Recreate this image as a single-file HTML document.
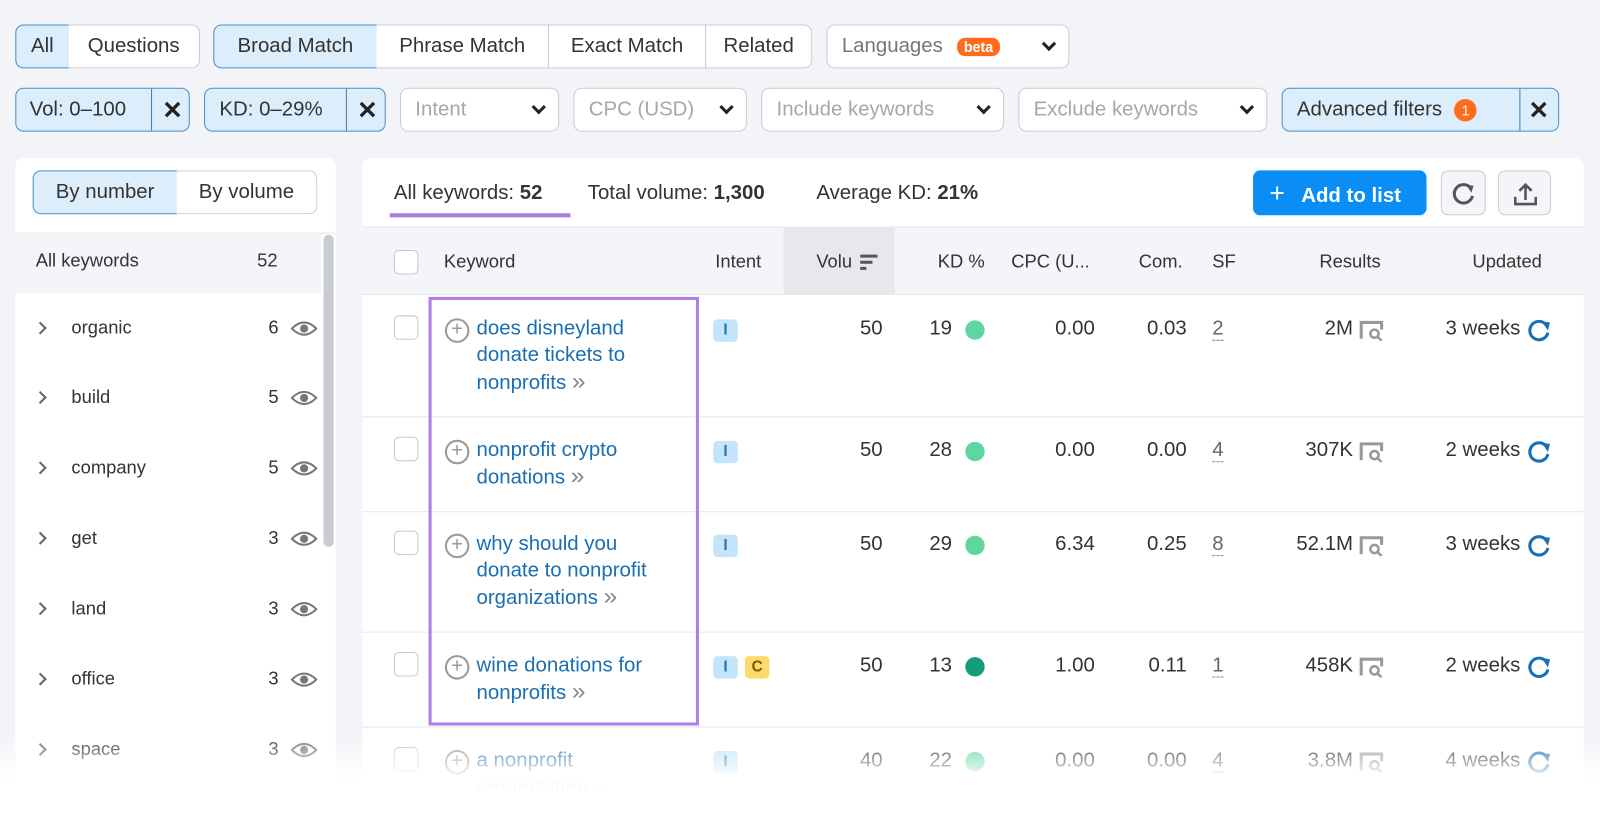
<!DOCTYPE html>
<html><head><meta charset="utf-8"><style>
*{box-sizing:border-box;margin:0;padding:0}
body{width:1600px;height:801px;background:#f3f4f8;font-family:"Liberation Sans",sans-serif;color:#333;position:relative;overflow:hidden;font-size:20px}
#w{position:absolute;left:0;top:0;width:1568px;height:785px;transform:scale(1.0204);transform-origin:0 0}
.a{position:absolute}
.btn{position:absolute;height:43px;border:1px solid #c8ccd4;background:#fff;display:flex;align-items:center;justify-content:center;font-size:20px;color:#333}
.sel{background:#dcedfb;border-color:#4a8fc6}
.ph{color:#a3a7ae;justify-content:space-between;padding:0 14px;border-radius:8px}
.chev{width:10px;height:10px;border-right:3px solid #222;border-bottom:3px solid #222;transform:rotate(45deg);margin-top:-5px}
.vl{position:absolute;top:0;bottom:0;width:1px;background:#3f7fb5}
.x{font-weight:bold;font-size:24px;color:#222}
.panel{position:absolute;background:#fff;border-radius:8px}
.li{position:absolute;left:35px;width:280px;font-size:18px;color:#333}
.li .c{position:absolute;left:0;top:6px;width:9px;height:9px;border-right:2px solid #666;border-bottom:2px solid #666;transform:rotate(-45deg)}
.li .t{position:absolute;left:35px}
.li .n{position:absolute;left:228px}
.eye{position:absolute;left:250px;top:2px}
.th{position:absolute;top:246px;font-size:18px;color:#333}
.hl{position:absolute;left:355px;width:1197px;height:1px;background:#e4e6eb}
.cb{position:absolute;left:386px;width:24px;height:24px;border:1px solid #c4c8cf;border-radius:5px;background:#fff}
.kw{position:absolute;left:467px;font-size:20px;color:#1a6fb3;line-height:26px}
.plus{position:absolute;left:436px;width:24px;height:24px;border:2px solid #999;border-radius:50%;color:#999;font-size:20px;line-height:18px;text-align:center}
.r{position:absolute;text-align:right;font-size:20px;color:#333}
.dot{position:absolute;width:19px;height:19px;border-radius:50%;background:#5ed6a0}
.badge{position:absolute;width:24px;height:22px;border-radius:4px;background:#c3e4fb;color:#1f77b4;font-size:15px;font-weight:bold;text-align:center;line-height:22px}
.sf{position:absolute;left:1188px;font-size:20px;color:#666;border-bottom:1px dashed #888;line-height:22px}
</style></head><body>
<div id="w">
<div class="btn sel" style="left:15px;top:24px;width:53px;border-radius:8px 0 0 8px">All</div>
<div class="btn" style="left:67px;top:24px;width:129px;border-radius:0 8px 8px 0;border-left:none">Questions</div>
<div class="btn sel" style="left:209px;top:24px;width:161px;border-radius:8px 0 0 8px">Broad Match</div>
<div class="btn" style="left:369px;top:24px;width:169px;border-left:none">Phrase Match</div>
<div class="btn" style="left:537px;top:24px;width:155px">Exact Match</div>
<div class="btn" style="left:691px;top:24px;width:105px;border-radius:0 8px 8px 0">Related</div>
<div class="btn ph" style="left:810px;top:24px;width:238px;color:#777"><span>Languages <span style="background:#ff6b1a;color:#fff;font-size:14px;font-weight:bold;border-radius:8px;padding:1px 7px;margin-left:8px">beta</span></span><span class="chev"></span></div>

<div class="btn sel" style="left:15px;top:86px;width:171px;border-radius:8px;justify-content:flex-start;padding-left:13px">Vol: 0–100<div class="vl" style="left:132px"></div><span class="x a" style="left:143px;top:7px">✕</span></div>
<div class="btn sel" style="left:200px;top:86px;width:178px;border-radius:8px;justify-content:flex-start;padding-left:14px">KD: 0–29%<div class="vl" style="left:138px"></div><span class="x a" style="left:149px;top:7px">✕</span></div>
<div class="btn ph" style="left:392px;top:86px;width:156px">Intent<span class="chev"></span></div>
<div class="btn ph" style="left:562px;top:86px;width:170px">CPC (USD)<span class="chev"></span></div>
<div class="btn ph" style="left:746px;top:86px;width:238px">Include keywords<span class="chev"></span></div>
<div class="btn ph" style="left:998px;top:86px;width:244px">Exclude keywords<span class="chev"></span></div>
<div class="btn sel" style="left:1256px;top:86px;width:272px;border-radius:8px;justify-content:flex-start;padding-left:14px">Advanced filters <span style="display:inline-block;width:22px;height:22px;border-radius:50%;background:#ff6b1a;color:#fff;font-size:14px;text-align:center;line-height:22px;margin-left:12px">1</span><div class="vl" style="left:232px"></div><span class="x a" style="left:241px;top:7px">✕</span></div>

<div class="panel" style="left:15px;top:155px;width:314px;height:660px"></div>
<div class="btn sel" style="left:32px;top:167px;width:142px;border-radius:8px 0 0 8px">By number</div>
<div class="btn" style="left:173px;top:167px;width:138px;border-radius:0 8px 8px 0;border-left:none">By volume</div>
<div class="a" style="left:15px;top:228px;width:314px;height:1px;background:#e4e6eb"></div>
<div class="a" style="left:15px;top:229px;width:300px;height:58px;background:#f4f5f8"></div>
<div class="a" style="left:35px;top:245px;font-size:18px">All keywords</div>
<div class="a" style="left:252px;top:245px;font-size:18px">52</div>
<div class="a" style="left:317px;top:230px;width:10px;height:306px;background:#c9ccd2;border-radius:5px"></div>
<div id="lis"></div>

<div class="panel" style="left:355px;top:155px;width:1197px;height:660px"></div>
<div class="a" style="left:386px;top:178px;font-size:20px">All keywords: <b>52</b></div>
<div class="a" style="left:382px;top:209px;width:177px;height:4px;background:#a87de0"></div>
<div class="a" style="left:576px;top:178px;font-size:20px">Total volume: <b>1,300</b></div>
<div class="a" style="left:800px;top:178px;font-size:20px">Average KD: <b>21%</b></div>
<div class="a" style="left:1228px;top:167px;width:170px;height:44px;background:#0a8ef5;border-radius:7px;color:#fff;font-weight:bold;font-size:20px;line-height:44px;padding-left:16px"><span style="font-size:26px;font-weight:normal;margin-right:16px">+</span>Add to list</div>
<div class="a" style="left:1412px;top:167px;width:44px;height:44px;border:1px solid #c8ccd4;border-radius:7px;background:#f4f5f8"><svg width="44" height="44"><path d="M28 16a9 9 0 1 0 2 8" fill="none" stroke="#555" stroke-width="3"/><path d="M24 13l7 1-2 7z" fill="#555"/></svg></div>
<div class="a" style="left:1468px;top:167px;width:52px;height:44px;border:1px solid #c8ccd4;border-radius:7px;background:#f4f5f8"><svg width="52" height="44"><path d="M26 28V13M20 19l6-6 6 6M16 25v7h20v-7" fill="none" stroke="#555" stroke-width="2.5"/></svg></div>

<div class="a" style="left:355px;top:222px;width:1197px;height:67px;background:#f4f5f8;border-top:1px solid #e4e6eb;border-bottom:1px solid #e4e6eb"></div>
<div class="a" style="left:768px;top:223px;width:109px;height:65px;background:#e7e8ed"></div>
<div class="cb" style="top:245px"></div>
<div class="th" style="left:435px">Keyword</div>
<div class="th" style="left:701px">Intent</div>
<div class="th" style="left:800px">Volu</div>
<svg class="a" style="left:842px;top:248px" width="20" height="18"><path d="M1 3h17M1 9h12M1 15h6" stroke="#555" stroke-width="3"/></svg>
<div class="th" style="left:919px">KD %</div>
<div class="th" style="left:991px">CPC (U...</div>
<div class="th" style="left:1116px">Com.</div>
<div class="th" style="left:1188px">SF</div>
<div class="th" style="left:1293px">Results</div>
<div class="th" style="left:1443px">Updated</div>

<div class="hl" style="top:408px"></div>
<div class="hl" style="top:501px"></div>
<div class="hl" style="top:619px"></div>
<div class="hl" style="top:712px"></div>

<div id="rows"></div>

<div class="a" style="left:420px;top:291px;width:265px;height:420px;border:3px solid #b07fe6"></div>
<div class="a" style="left:0;top:718px;width:1600px;height:100px;background:linear-gradient(rgba(255,255,255,0),rgba(255,255,255,0.93) 45%,#fff 60%)"></div>
</div>

<script>
var L=[["organic",6,321],["build",5,389],["company",5,458],["get",3,527],["land",3,596],["office",3,665],["space",3,734]];
var h="";L.forEach(function(l){h+='<div class="li" style="top:'+(l[2]-10)+'px"><span class="c"></span><span class="t">'+l[0]+'</span><span class="n">'+l[1]+'</span><svg class="eye" width="26" height="18"><path d="M1 9Q13-3 25 9Q13 21 1 9z" fill="none" stroke="#777" stroke-width="2"/><circle cx="13" cy="9" r="4" fill="#777"/></svg></div>';});
document.getElementById("lis").innerHTML=h;
var R=[[311,["does disneyland","donate tickets to","nonprofits"],"I",50,19,"#5ed6a0","0.00","0.03",2,"2M","3 weeks"],
[430,["nonprofit crypto","donations"],"I",50,28,"#5ed6a0","0.00","0.00",4,"307K","2 weeks"],
[522,["why should you","donate to nonprofit","organizations"],"I",50,29,"#5ed6a0","6.34","0.25",8,"52.1M","3 weeks"],
[641,["wine donations for","nonprofits"],"IC",50,13,"#139d7a","1.00","0.11",1,"458K","2 weeks"],
[734,["a nonprofit","organization"],"I",40,22,"#5ed6a0","0.00","0.00",4,"3.8M","4 weeks"]];
var s="";R.forEach(function(r){var y=r[0];
s+='<div class="cb" style="top:'+(y-2)+'px"></div><div class="plus" style="top:'+(y+1)+'px">+</div>';
s+='<div class="kw" style="top:'+(y-2)+'px">'+r[1].join("<br>")+' <span style="color:#888;font-size:24px">»</span></div>';
s+='<div class="badge" style="left:699px;top:'+(y+2)+'px">I</div>';
if(r[2]=="IC")s+='<div class="badge" style="left:730px;top:'+(y+2)+'px;background:#fcdb6c;color:#7a5a00">C</div>';
s+='<div class="r" style="right:703px;top:'+y+'px">'+r[3]+'</div>';
s+='<div class="r" style="right:635px;top:'+y+'px">'+r[4]+'</div><div class="dot" style="left:946px;top:'+(y+3)+'px;background:'+r[5]+'"></div>';
s+='<div class="r" style="right:495px;top:'+y+'px">'+r[6]+'</div>';
s+='<div class="r" style="right:405px;top:'+y+'px">'+r[7]+'</div>';
s+='<div class="sf" style="top:'+y+'px">'+r[8]+'</div>';
s+='<div class="r" style="right:242px;top:'+y+'px">'+r[9]+'</div><svg class="a" style="left:1332px;top:'+(y+3)+'px" width="24" height="20"><path d="M2 18V2h20v7" fill="none" stroke="#999" stroke-width="3"/><circle cx="15" cy="13" r="4" fill="none" stroke="#999" stroke-width="2.5"/><path d="M18 16l4 4" stroke="#999" stroke-width="2.5"/></svg>';
s+='<div class="r" style="right:78px;top:'+y+'px">'+r[10]+'</div><svg class="a" style="left:1497px;top:'+(y+1)+'px" width="24" height="24"><path d="M18 6a9 9 0 1 0 2 8" fill="none" stroke="#1a6fb3" stroke-width="3"/><path d="M14 3l8 1-2 8z" fill="#1a6fb3"/></svg>';
});
document.getElementById("rows").innerHTML=s;
</script>
</body></html>
